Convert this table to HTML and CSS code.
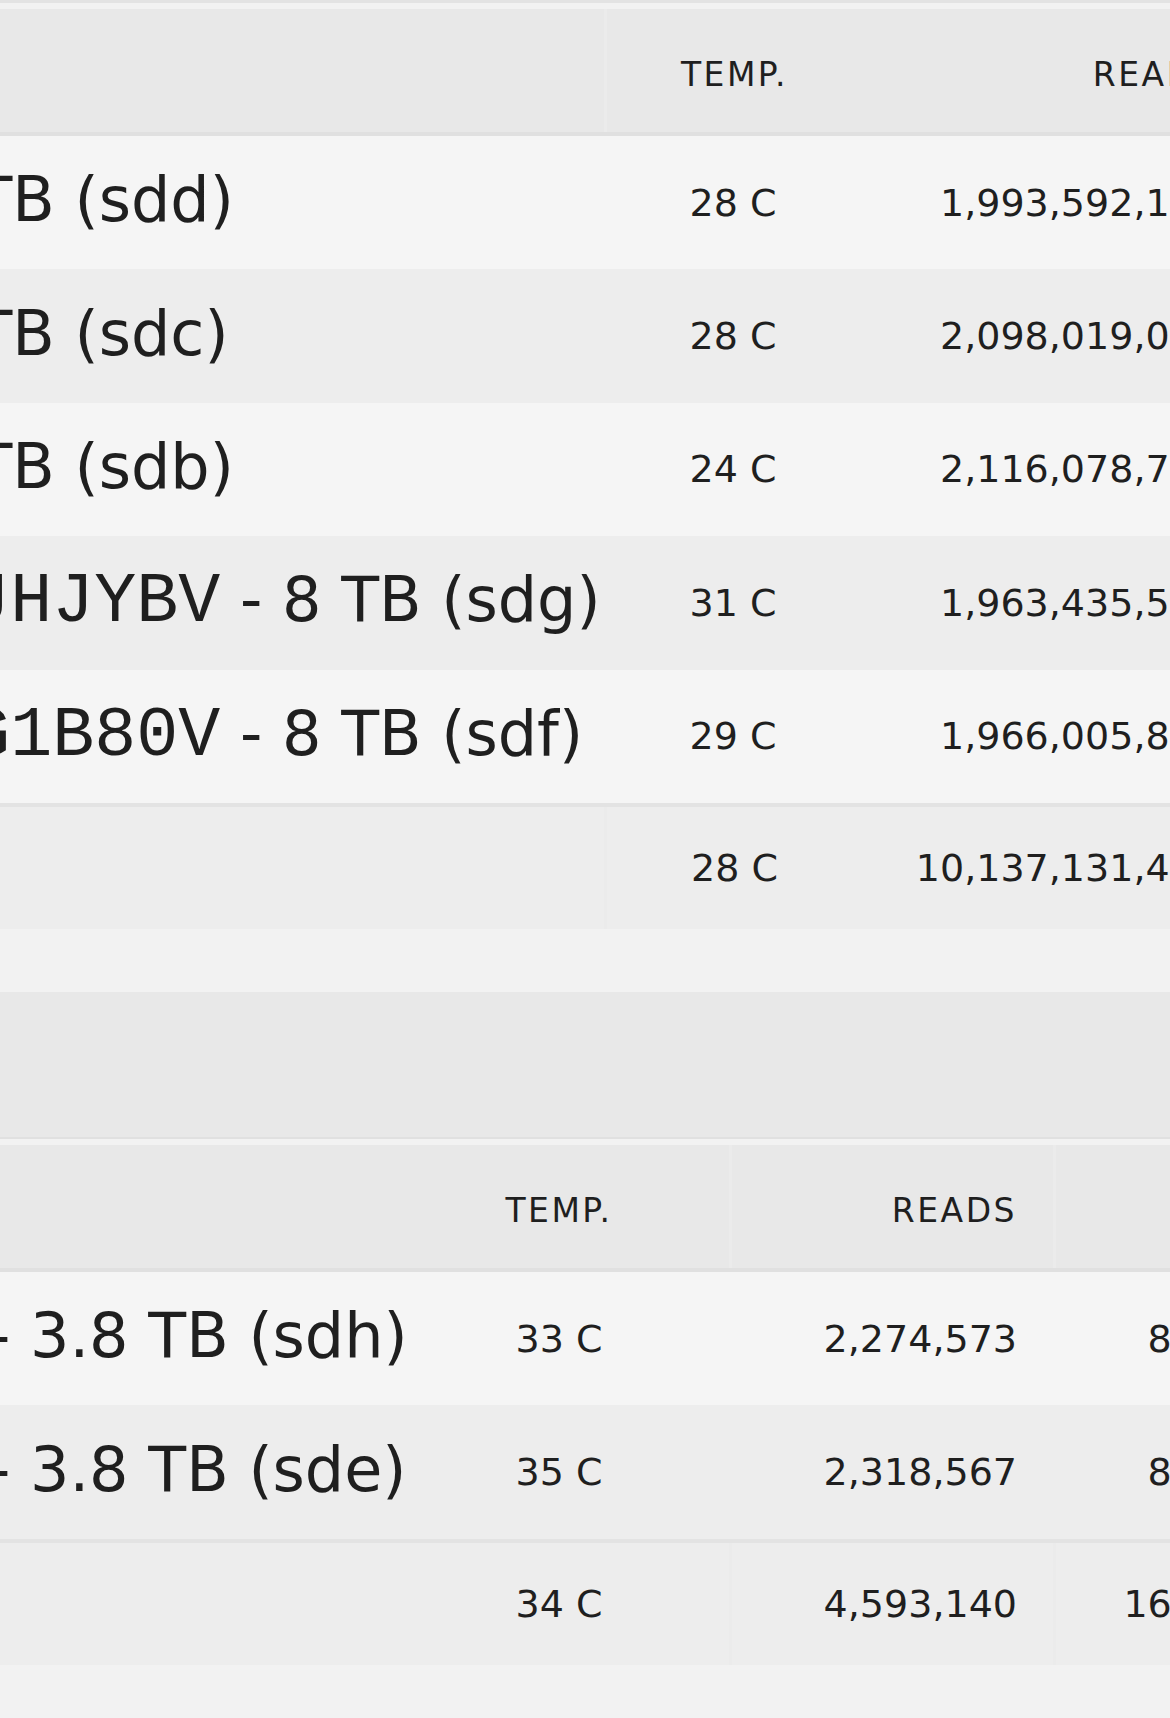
FILE: index.html
```html
<!DOCTYPE html>
<html lang="en">
<head>
<meta charset="utf-8">
<title>Disks</title>
<link rel="stylesheet" href="styles.css">
</head>
<body>
<div class="viewport">
  <div class="canvas">
    <div class="prev-title"></div>
    <section class="panel">
      <div class="table array">
        <div class="row head">
          <div class="cell name">DEVICE</div>
          <div class="cell temp">TEMP.</div>
          <div class="cell num">READS</div>
          <div class="cell num">WRITES</div>
          <div class="cell num">ERRORS</div>
        </div>
        <div class="row odd">
          <div class="cell name"><span class="dev"><span class="mono">ST8000VN004_WSD1A2B3</span>&ensp;- 8 TB (sdd)</span></div>
          <div class="cell temp">28 C</div>
          <div class="cell num">1,993,592,175</div>
          <div class="cell num">8,402,117</div>
          <div class="cell num">0</div>
        </div>
        <div class="row even">
          <div class="cell name"><span class="dev"><span class="mono">ST8000VN004_WSD1C4D5</span>&ensp;- 8 TB (sdc)</span></div>
          <div class="cell temp">28 C</div>
          <div class="cell num">2,098,019,088</div>
          <div class="cell num">8,390,552</div>
          <div class="cell num">0</div>
        </div>
        <div class="row odd">
          <div class="cell name"><span class="dev"><span class="mono">ST8000VN004_WSD1E6F7</span>&ensp;- 8 TB (sdb)</span></div>
          <div class="cell temp">24 C</div>
          <div class="cell num">2,116,078,752</div>
          <div class="cell num">8,377,019</div>
          <div class="cell num">0</div>
        </div>
        <div class="row even">
          <div class="cell name"><span class="dev"><span class="mono">WDC_WD80EFAX-68KNBN0_VAJHJYBV</span> - 8 TB (sdg)</span></div>
          <div class="cell temp">31 C</div>
          <div class="cell num">1,963,435,527</div>
          <div class="cell num">8,361,840</div>
          <div class="cell num">0</div>
        </div>
        <div class="row odd">
          <div class="cell name"><span class="dev"><span class="mono">WDC_WD80EFAX-68KNBN0_VAG1B80V</span> - 8 TB (sdf)</span></div>
          <div class="cell temp">29 C</div>
          <div class="cell num">1,966,005,893</div>
          <div class="cell num">8,366,105</div>
          <div class="cell num">0</div>
        </div>
        <div class="row total">
          <div class="cell name"></div>
          <div class="cell temp">28 C</div>
          <div class="cell num">10,137,131,435</div>
          <div class="cell num">41,897,633</div>
          <div class="cell num">0</div>
        </div>
      </div>
    </section>

    <section class="panel next">
      <div class="panel-title"></div>
      <div class="table cache">
        <div class="row head">
          <div class="cell name">DEVICE</div>
          <div class="cell temp">TEMP.</div>
          <div class="cell num">READS</div>
          <div class="cell num">WRITES</div>
          <div class="cell num">ERRORS</div>
        </div>
        <div class="row odd">
          <div class="cell name"><span class="dev"><span class="mono">SAMSUNG_MZ7LH3T8_S456NY</span> - 3.8 TB (sdh)</span></div>
          <div class="cell temp">33 C</div>
          <div class="cell num">2,274,573</div>
          <div class="cell num">8,145,902</div>
          <div class="cell num">0</div>
        </div>
        <div class="row even">
          <div class="cell name"><span class="dev"><span class="mono">SAMSUNG_MZ7LH3T8_S456NZ</span> - 3.8 TB (sde)</span></div>
          <div class="cell temp">35 C</div>
          <div class="cell num">2,318,567</div>
          <div class="cell num">8,301,377</div>
          <div class="cell num">0</div>
        </div>
        <div class="row total">
          <div class="cell name"></div>
          <div class="cell temp">34 C</div>
          <div class="cell num">4,593,140</div>
          <div class="cell num">16,447,279</div>
          <div class="cell num">0</div>
        </div>
      </div>
    </section>
  </div>
</div>
</body>
</html>
```

FILE: styles.css
```css
html, body {
  margin: 0;
  padding: 0;
}

body {
  background: #f2f2f2;
  color: #1f1f1f;
  font-family: "DejaVu Sans", "Noto Sans", sans-serif;
  overflow: hidden;
}

.viewport {
  width: 1170px;
  height: 1718px;
  overflow: hidden;
}

/* the page is scrolled sideways: the device names start off to the left */
.canvas {
  margin-left: -1010px;
  width: 2700px;
}

.prev-title {
  height: 3px;
  background: #e3e3e3;
  margin-bottom: 6px;
}

.panel.next {
  margin-top: 63px;
}

.panel-title {
  height: 145px;
  background: #e8e8e8;
  border-bottom: 2px solid #e0e0e0;
  margin-bottom: 6px;
}

.array {
  --cols: 1614px 258px 392px 300px 200px;
}

.cache {
  --cols: 1399px 340px 324px 324px 200px;
}

.row {
  display: grid;
  grid-template-columns: var(--cols);
}

.cell {
  display: flex;
  align-items: center;
  padding: 0 36px;
  white-space: nowrap;
  box-sizing: border-box;
}

.cell.name {
  padding-left: 12px;
  font-size: 62px;
}

.dev {
  white-space: pre;
}

.cell.temp {
  justify-content: center;
}

.cell.num {
  justify-content: flex-end;
}

.mono {
  font-family: "Liberation Mono", monospace;
  font-size: 70px;
}

.head {
  height: 123px;
  background: #e8e8e8;
  border-bottom: 4px solid #e0e0e0;
  font-size: 33px;
  letter-spacing: 2.5px;
}

.head .cell {
  padding-top: 8px;
}

.head .cell.name {
  font-size: 33px;
}

.array .head .cell.temp,
.array .total .cell.temp,
.cache .head .cell.num,
.cache .total .cell.num {
  border-left: 3px solid #ebebeb;
}

.row.odd,
.row.even,
.row.total {
  font-size: 38px;
}

.row.odd,
.row.even {
  height: 133.4px;
}

.row.odd {
  background: #f5f5f5;
}

.row.even {
  background: #ededed;
}

.row.total {
  height: 122px;
  background: #ededed;
  border-top: 4px solid #e3e3e3;
}
```
